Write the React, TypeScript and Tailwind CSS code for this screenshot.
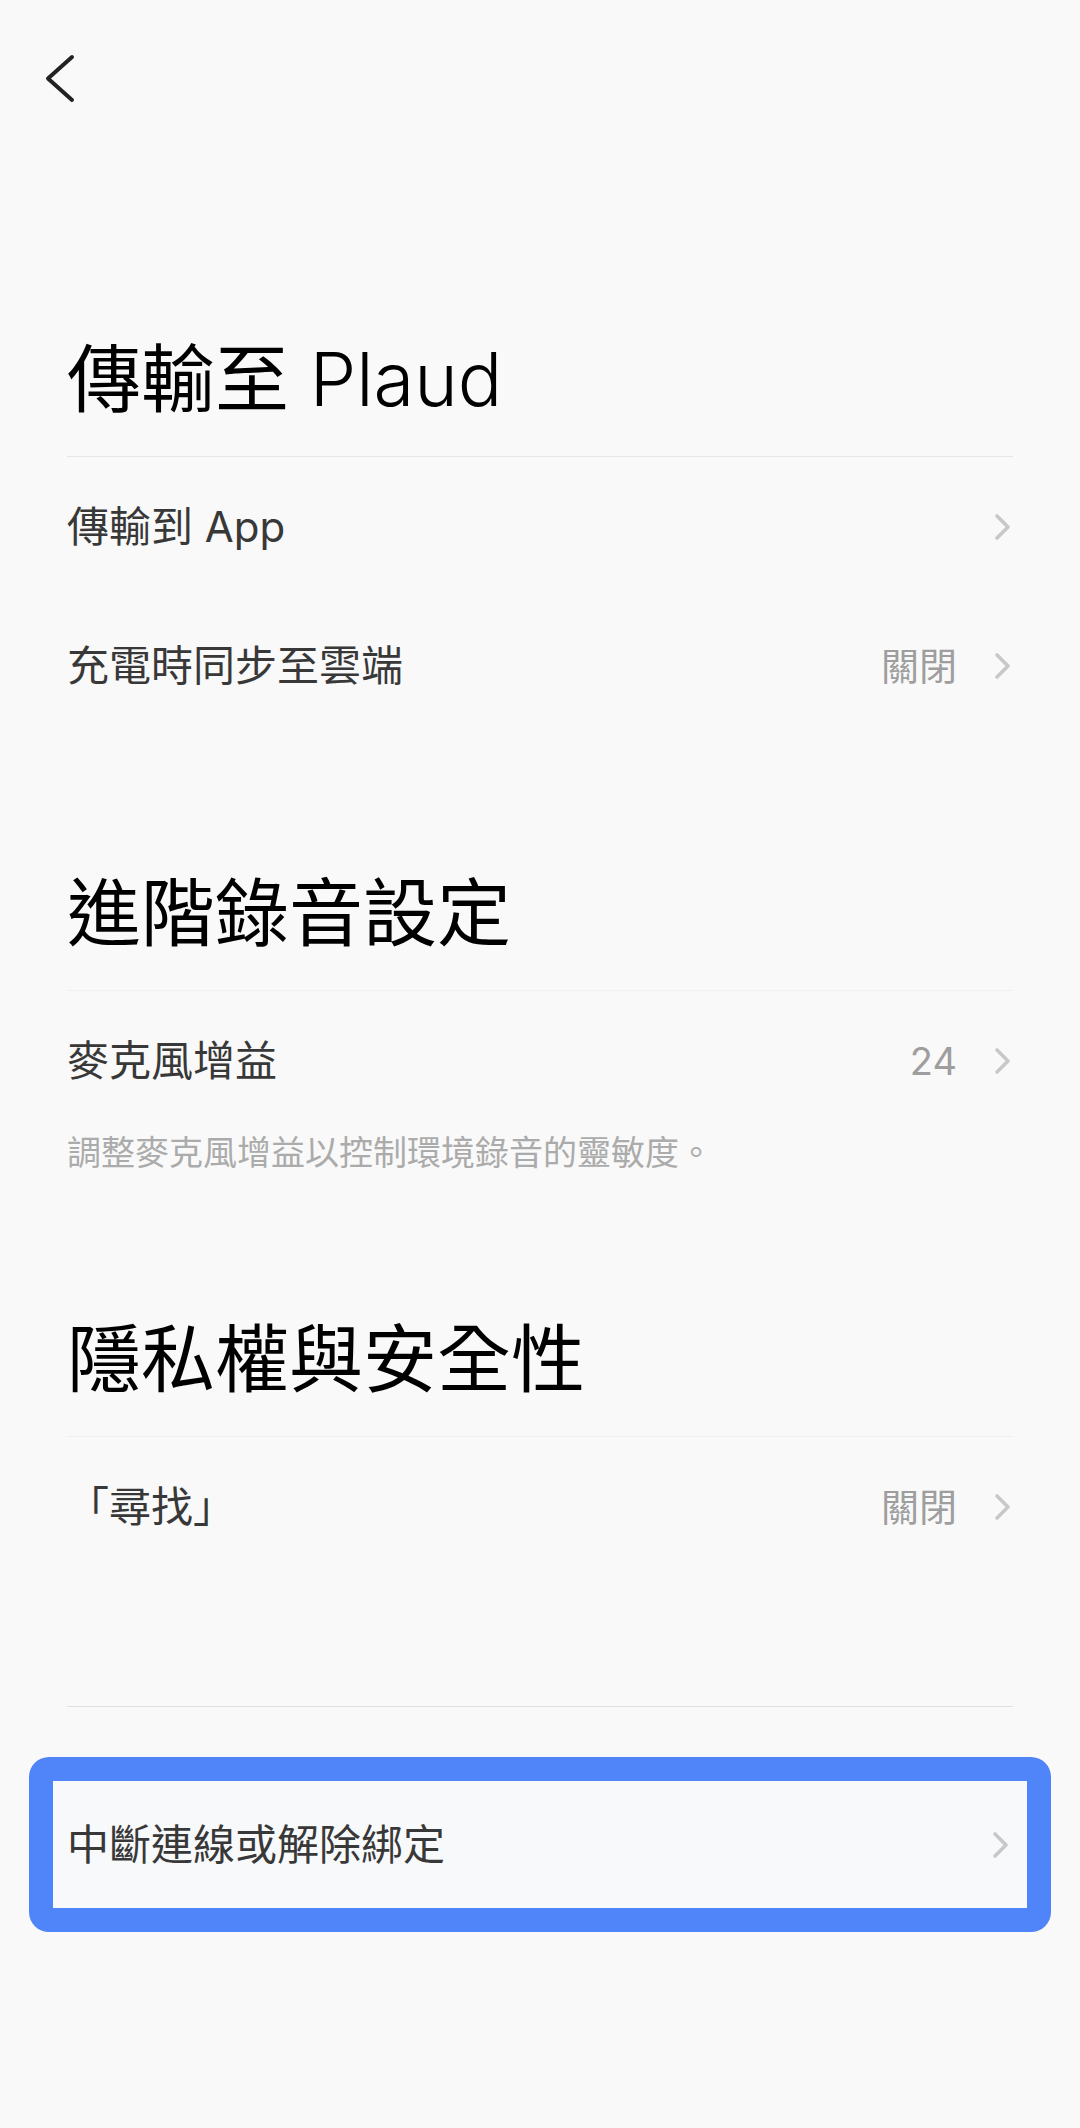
import React from "react"

function Chevron() {
  return (
    <svg width="20" height="28" viewBox="0 0 20 28" className="shrink-0">
      <polyline points="4,3 15,14 4,25" fill="none" stroke="#c8c8c8" strokeWidth="3.6" strokeLinecap="round" strokeLinejoin="round" />
    </svg>
  )
}

function Row(props: { label: string; value?: string }) {
  return (
    <div className="h-[139px] flex items-center justify-between">
      <span className="text-[42px] leading-[42px] text-[#383838]">{props.label}</span>
      <div className="flex items-center gap-[36px]">
        {props.value ? <span className="text-[38px] leading-[38px] text-[#9e9e9e]">{props.value}</span> : null}
        <Chevron />
      </div>
    </div>
  )
}

function Title(props: { children: React.ReactNode; line: string; className?: string }) {
  return (
    <h2 className={"text-[74px] leading-[74px] text-black pb-[40px] border-b " + props.line + " " + (props.className || "")}>
      {props.children}
    </h2>
  )
}

export default function App() {
  return (
    <div className="min-h-[2128px] bg-[#f9f9f9] font-['Inter','Noto_Sans_CJK_TC',sans-serif]">
      <div className="h-[156px] pl-[44px] pt-[53px]">
        <svg width="32" height="52" viewBox="0 0 32 52">
          <polyline points="28,4 4,25.5 28,47" fill="none" stroke="#222" strokeWidth="4" strokeLinecap="round" strokeLinejoin="round" />
        </svg>
      </div>

      <div className="px-[67px]">
        <Title line="border-[#e6e6e6]" className="mt-[186px]">
          傳輸至 <span className="font-light">Plaud</span>
        </Title>
        <Row label="傳輸到 App" />
        <Row label="充電時同步至雲端" value="關閉" />

        <Title line="border-[#f0f0f0]" className="mt-[141px]">進階錄音設定</Title>
        <Row label="麥克風增益" value="24" />
        <p className="mt-[6px] text-[34px] leading-[34px] text-[#ababab]">調整麥克風增益以控制環境錄音的靈敏度。</p>

        <Title line="border-[#f0f0f0]" className="mt-[152px]">隱私權與安全性</Title>
        <Row label="「尋找」" value="關閉" />

        <div className="mt-[130px] h-px bg-[#e0e0e6]" />
      </div>

      <div className="mt-[50px] mx-[29px] rounded-[20px] border-[24px] border-[#4f85f8] bg-[#f8f9fb]">
        <div className="h-[127px] pl-[14px] pr-[16px] flex items-center justify-between">
          <span className="text-[42px] leading-[42px] text-[#383838]">中斷連線或解除綁定</span>
          <Chevron />
        </div>
      </div>
    </div>
  )
}
